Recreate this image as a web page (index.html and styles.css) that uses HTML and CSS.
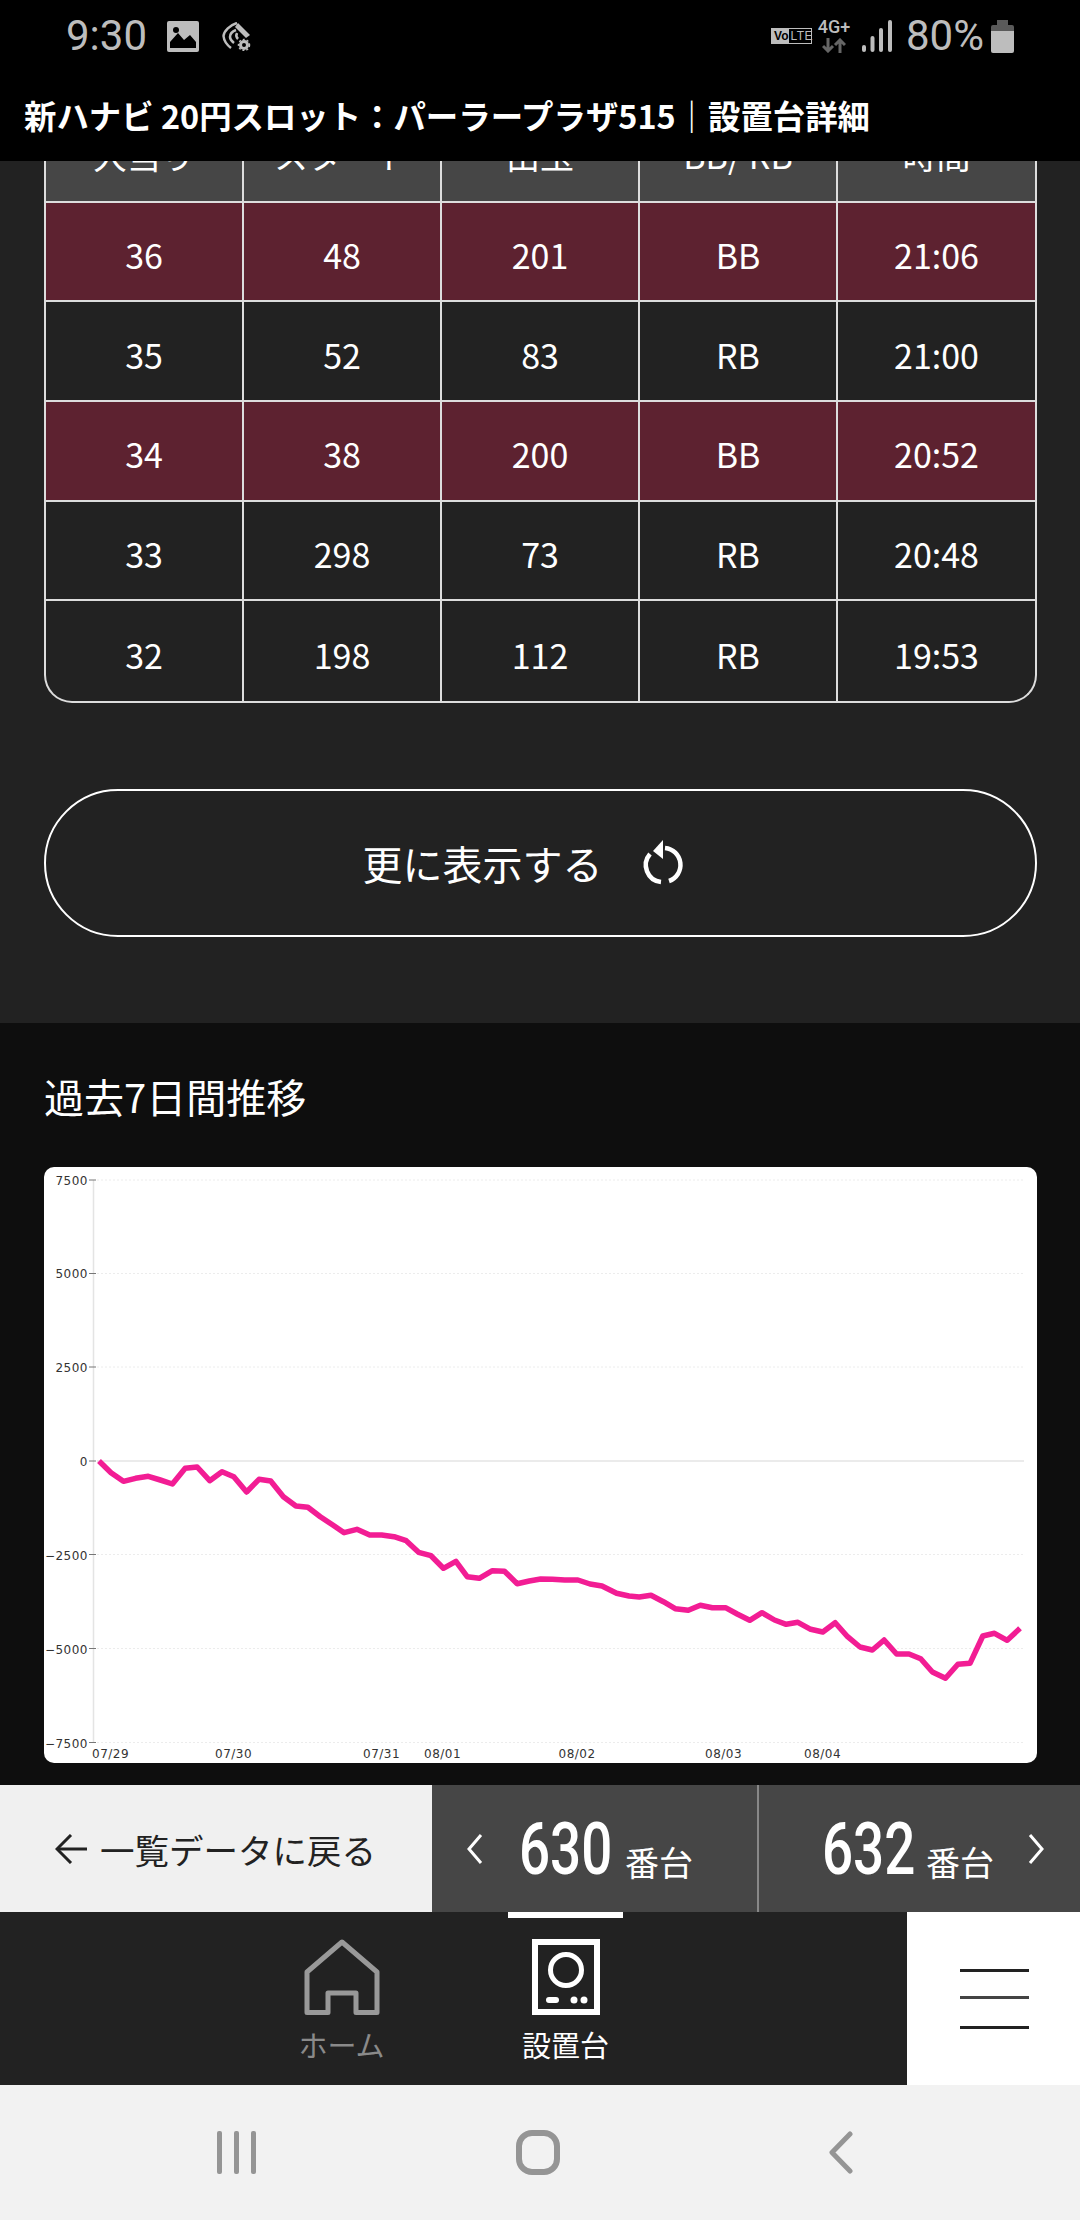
FILE: index.html
```html
<!DOCTYPE html>
<html lang="ja">
<head>
  <meta charset="UTF-8">
  <title>新ハナビ 20円スロット：パーラープラザ515｜設置台詳細</title>
  <link rel="stylesheet" href="styles.css">
</head>
<body>
  <div class="top">
    <div class="statusbar">
      <div class="status-left">
        <span class="clock">9:30</span>
        <svg class="ic-image" width="32" height="31" viewBox="0 0 32 31">
          <rect width="32" height="31" rx="2" fill="#bdbdbd"/>
          <path d="M3 27V21L11 12L17 19L23 14L29 21V27Z" fill="#000"/>
          <circle cx="9" cy="9" r="3" fill="#000"/>
        </svg>
        <svg class="ic-call" width="29" height="29" viewBox="0 0 29 29" fill="none" stroke="#bdbdbd">
          <path d="M15 1C8 3 2 9 1.500 14C2 19 5 23 9 26" stroke-width="2.500"/>
          <path d="M14 8C10 9.500 8 12 8 15C8 17 10 19.500 12 21" stroke-width="2.500"/>
          <path d="M16 1L28 13L24 16L13 5Z" fill="#bdbdbd" stroke="none"/>
          <path d="M15 11C14 13 14 15 16 17" stroke-width="2.500"/>
          <circle cx="22" cy="23" r="3.500" stroke-width="3"/>
          <circle cx="22" cy="23" r="5.500" stroke-width="1.500" stroke-dasharray="2 2"/>
        </svg>
      </div>
      <div class="status-right">
        <span class="volte"><b>Vo</b><i>LTE</i></span>
        <span class="net">
          <span class="net-label">4G+</span>
          <svg width="24" height="15" viewBox="0 0 24 15" fill="none" stroke="#666" stroke-width="3">
            <path d="M6 0V12M1 8L6 13L11 8"/>
            <path d="M18 15V3M13 7L18 2L23 7"/>
          </svg>
        </span>
        <svg class="ic-signal" width="30" height="32" viewBox="0 0 30 32" fill="#bdbdbd">
          <rect x="0" y="25" width="4" height="7" rx="2"/>
          <rect x="8.500" y="16" width="4" height="16" rx="2"/>
          <rect x="17" y="8" width="4" height="24" rx="2"/>
          <rect x="26" y="0" width="4" height="32" rx="2"/>
        </svg>
        <span class="battery-text">80%</span>
        <svg class="ic-battery" width="23" height="33" viewBox="0 0 23 33">
          <path d="M6 0H17V5H21Q23 5 23 7V11H0V7Q0 5 2 5H6Z" fill="#5a5a5a"/>
          <path d="M0 11H23V31Q23 33 21 33H2Q0 33 0 31Z" fill="#bdbdbd"/>
        </svg>
      </div>
    </div>
    <h1 class="page-title">新ハナビ 20円スロット：パーラープラザ515｜設置台詳細</h1>
  </div>

  <main class="content">
    <section class="history">
      <div class="data-table">
        <div class="cell head">大当り</div><div class="cell head">スタート</div><div class="cell head">出玉</div><div class="cell head">BB/ RB</div><div class="cell head">時間</div>
        <div class="cell bb">36</div><div class="cell bb">48</div><div class="cell bb">201</div><div class="cell bb">BB</div><div class="cell bb">21:06</div>
        <div class="cell">35</div><div class="cell">52</div><div class="cell">83</div><div class="cell">RB</div><div class="cell">21:00</div>
        <div class="cell bb">34</div><div class="cell bb">38</div><div class="cell bb">200</div><div class="cell bb">BB</div><div class="cell bb">20:52</div>
        <div class="cell">33</div><div class="cell">298</div><div class="cell">73</div><div class="cell">RB</div><div class="cell">20:48</div>
        <div class="cell">32</div><div class="cell">198</div><div class="cell">112</div><div class="cell">RB</div><div class="cell">19:53</div>
      </div>
      <button class="more-btn">
        <span>更に表示する</span>
        <svg width="48" height="48" viewBox="0 0 48 48" fill="none" stroke="#fff" stroke-width="4.500">
          <path d="M14 12L24 1V20Z" fill="#fff" stroke="none"/>
          <path d="M26 9A17 17 0 0 1 30 42"/>
          <path d="M22 43A17 17 0 0 1 11 15"/>
        </svg>
      </button>
    </section>

    <section class="trend">
      <h2 class="trend-title">過去7日間推移</h2>
      <div class="chart-card">
        <svg class="chart" width="994" height="596" viewBox="44 1167 994 596">
          <g stroke="#ececec" stroke-width="1" stroke-dasharray="2 2">
            <path d="M97 1180H1024"/>
            <path d="M97 1273.500H1024"/>
            <path d="M97 1367H1024"/>
            <path d="M97 1554.500H1024"/>
            <path d="M97 1648.500H1024"/>
            <path d="M97 1742.500H1024"/>
          </g>
          <path d="M97 1461H1024" stroke="#e4e4e4" stroke-width="1.500"/>
          <path d="M93.500 1180V1743" stroke="#e4e4e4" stroke-width="1.500"/>
          <g stroke="#777" stroke-width="1">
            <path d="M89 1180H96"/>
            <path d="M89 1273.500H96"/>
            <path d="M89 1367H96"/>
            <path d="M89 1461H96"/>
            <path d="M89 1554.500H96"/>
            <path d="M89 1648.500H96"/>
            <path d="M89 1742.500H96"/>
          </g>
          <g class="y-labels">
            <text x="88" y="1184.500">7500</text>
            <text x="88" y="1278">5000</text>
            <text x="88" y="1372">2500</text>
            <text x="88" y="1465.500">0</text>
            <text x="88" y="1559.500">−2500</text>
            <text x="88" y="1654">−5000</text>
            <text x="88" y="1748">−7500</text>
          </g>
          <g class="x-labels">
            <text x="92" y="1758">07/29</text>
            <text x="215" y="1758">07/30</text>
            <text x="363" y="1758">07/31</text>
            <text x="424" y="1758">08/01</text>
            <text x="558.500" y="1758">08/02</text>
            <text x="705" y="1758">08/03</text>
            <text x="804" y="1758">08/04</text>
          </g>
          <polyline class="line" points="99,1461 111,1472.700 123.400,1481.300 135.500,1478.300 148.300,1476.300 160.300,1480 172.400,1484 185.200,1468.300 197.200,1467 209.700,1480.700 222,1471.700 233.800,1476.700 246.600,1492 259,1479.300 270.700,1481 283.400,1496.700 295.900,1506 307.900,1507.300 320.300,1516.700 332.800,1525 344.100,1532.700 356.900,1529.300 369.700,1535 381.700,1535 394.100,1536.700 406.200,1540.700 418.600,1552.300 431,1555.700 443.400,1568.300 455.900,1561.300 467.200,1576.700 479.300,1578.300 492.400,1570.700 504.500,1571.300 517.200,1583.700 529.300,1581 540.700,1579 552.400,1579.300 564.800,1580 577.900,1580 590,1584 602,1586 616.600,1593.300 629,1596 639.300,1597 651,1595.300 663.400,1601.700 675.200,1608.700 688.300,1610.300 700.300,1605.300 712.400,1607.700 725.500,1607.700 737.200,1614 749.700,1620.300 762,1612.700 774.500,1620 786.200,1624.300 797.900,1622.300 810.700,1629.300 822.800,1632 835.200,1622.700 847.600,1636.700 860,1647 872.400,1650 884.100,1640 896.600,1654 909,1654 920.700,1658.700 932.400,1672 945.500,1678.300 957.900,1664.300 970,1663.300 982.800,1636 994.500,1633.300 1007.200,1640.300 1020,1628.300"/>
        </svg>
      </div>
    </section>
  </main>

  <div class="pager">
    <a class="back-link">
      <svg width="32" height="30" viewBox="0 0 32 30" fill="none" stroke="#222" stroke-width="3">
        <path d="M16 1L2 15L16 29"/>
        <path d="M2 15H32"/>
      </svg>
      <span>一覧データに戻る</span>
    </a>
    <a class="pager-item prev">
      <svg class="chev" width="17" height="30" viewBox="0 0 17 30" fill="none" stroke="#fff" stroke-width="3"><path d="M15 1L3 15L15 29"/></svg>
      <span class="num">630</span>
      <span class="unit">番台</span>
    </a>
    <a class="pager-item next">
      <span class="num">632</span>
      <span class="unit">番台</span>
      <svg class="chev" width="17" height="30" viewBox="0 0 17 30" fill="none" stroke="#fff" stroke-width="3"><path d="M2 1L14 15L2 29"/></svg>
    </a>
  </div>

  <nav class="tabbar">
    <div class="tabs">
      <a class="tab">
        <svg width="76" height="76" viewBox="0 0 76 76" fill="none" stroke="#999" stroke-width="5" stroke-linejoin="round">
          <path d="M38 3L3 33V73.500H24V54H52V73.500H73V33Z"/>
        </svg>
        <span>ホーム</span>
      </a>
      <a class="tab active">
        <svg width="68" height="76" viewBox="0 0 68 76" fill="#fff">
          <rect x="3" y="3" width="62" height="70" fill="none" stroke="#fff" stroke-width="6"/>
          <circle cx="34" cy="31" r="15.500" fill="none" stroke="#fff" stroke-width="5"/>
          <rect x="14" y="58" width="13" height="6" rx="3"/>
          <circle cx="42" cy="61" r="3.500"/>
          <circle cx="52" cy="61" r="3.500"/>
        </svg>
        <span>設置台</span>
      </a>
    </div>
    <a class="menu-btn">
      <svg width="69" height="60" viewBox="0 0 69 60" fill="#222">
        <rect y="0" width="69" height="3"/>
        <rect y="27" width="69" height="3" fill="#444"/>
        <rect y="57" width="69" height="3"/>
      </svg>
    </a>
  </nav>

  <div class="sysnav">
    <svg class="sys-recent" width="39" height="43" viewBox="0 0 39 43" fill="#959595">
      <rect x="0" y="0" width="5" height="43" rx="2"/>
      <rect x="17" y="0" width="5" height="43" rx="2"/>
      <rect x="34" y="0" width="5" height="43" rx="2"/>
    </svg>
    <svg class="sys-home" width="44" height="45" viewBox="0 0 44 45" fill="none" stroke="#959595" stroke-width="6">
      <rect x="3" y="3" width="38" height="39" rx="13"/>
    </svg>
    <svg class="sys-back" width="25" height="43" viewBox="0 0 25 43" fill="none" stroke="#959595" stroke-width="5" stroke-linecap="round" stroke-linejoin="round">
      <path d="M22 3L4 21.500L22 40"/>
    </svg>
  </div>
</body>
</html>
```

FILE: styles.css
```css
* {
  box-sizing: border-box;
}
html, body {
  margin: 0;
  padding: 0;
}
body {
  width: 1080px;
  height: 2220px;
  overflow: hidden;
  display: flex;
  flex-direction: column;
  background: #222;
  color: #fff;
  font-family: "Noto Sans CJK JP", sans-serif;
}
a {
  display: flex;
  text-decoration: none;
}

/* status bar + title */
.top {
  position: relative;
  z-index: 2;
  height: 161px;
  flex-shrink: 0;
  background: #000;
}
.statusbar {
  height: 72px;
  padding: 0 66px 0 66px;
  display: flex;
  justify-content: space-between;
  align-items: center;
  font-family: Roboto, sans-serif;
  font-size: 42px;
  color: #bdbdbd;
}
.status-left, .status-right {
  display: flex;
  align-items: center;
}
.clock {
  line-height: 42px;
}
.ic-image {
  margin-left: 20px;
}
.ic-call {
  margin-left: 23px;
}
.volte {
  display: flex;
  width: 41px;
  height: 16px;
  border: 1px solid #bdbdbd;
  font-family: "Liberation Sans", sans-serif;
  font-size: 12px;
  line-height: 14px;
}
.volte b {
  background: #bdbdbd;
  color: #000;
  padding: 0 1px 0 2px;
}
.volte i {
  font-style: normal;
  padding-left: 1px;
  letter-spacing: 0.5px;
}
.net {
  display: flex;
  flex-direction: column;
  align-items: center;
  margin-left: 6px;
  width: 32px;
}
.net-label {
  font-size: 18px;
  line-height: 16px;
  font-weight: 500;
  margin-bottom: 3px;
}
.ic-signal {
  margin-left: 12px;
}
.battery-text {
  margin-left: 14px;
  line-height: 42px;
}
.ic-battery {
  margin-left: 7px;
}
.page-title {
  margin: 0;
  padding: 0 0 5px 24px;
  height: 89px;
  display: flex;
  align-items: center;
  white-space: nowrap;
  font-size: 32.4px;
  font-weight: 700;
  color: #fff;
}

/* scrolled content */
.content {
  height: 1624px;
  flex-shrink: 0;
  overflow: hidden;
}
.history {
  display: flow-root;
  height: 862px;
  padding: 0 43px 0 44px;
  background: #222;
}
.data-table {
  margin-top: -58px;
  display: grid;
  grid-template-columns: 198px 198px 198px 198px 1fr;
  grid-auto-rows: 99.7px;
  border-left: 2px solid #ddd;
  border-bottom-left-radius: 28px;
  border-bottom-right-radius: 28px;
  overflow: hidden;
  border-bottom: 2px solid #ddd;
  border-right: 2px solid #ddd;
}
.cell {
  display: flex;
  align-items: center;
  justify-content: center;
  padding-top: 6px;
  border-right: 2px solid #ddd;
  border-bottom: 2px solid #ddd;
  font-size: 34px;
  color: #fff;
}
.cell:nth-child(5n) {
  border-right: 0;
}
.cell:nth-last-child(-n+5) {
  border-bottom: 0;
}
.cell.head {
  background: #464646;
}
.cell.bb {
  background: #5d2230;
}
.more-btn {
  width: 100%;
  height: 148px;
  margin-top: 86px;
  padding: 0 32px 0 0;
  display: flex;
  align-items: center;
  justify-content: center;
  gap: 36px;
  background: transparent;
  border: 2px solid #fff;
  border-radius: 74px;
  color: #fff;
  font-family: inherit;
  font-size: 40px;
}
.trend {
  height: 762px;
  padding: 0 43px 0 44px;
  background: #0e0e0e;
}
.trend-title {
  margin: 0;
  height: 144px;
  padding-top: 44px;
  font-size: 40px;
  font-weight: 400;
  line-height: 58px;
}
.chart-card {
  height: 596px;
  background: #fff;
  border-radius: 10px;
  overflow: hidden;
}
.chart {
  display: block;
  font-family: "DejaVu Sans", sans-serif;
  font-size: 12px;
  letter-spacing: 0.5px;
}
.chart text {
  fill: #333;
}
.y-labels {
  text-anchor: end;
}
.line {
  fill: none;
  stroke: #f21d94;
  stroke-width: 5.5;
  stroke-linejoin: round;
}

/* prev / next bar */
.pager {
  display: flex;
  height: 127px;
  flex-shrink: 0;
}
.back-link {
  width: 432px;
  padding-left: 55px;
  align-items: center;
  gap: 13px;
  background: #f0f0f0;
  color: #222;
  font-size: 34.5px;
}
.pager-item {
  align-items: center;
  background: #464646;
  color: #fff;
}
.pager-item.prev {
  width: 327px;
  padding-left: 34px;
  border-right: 2px solid #888;
}
.pager-item.next {
  flex: 1;
  padding-left: 63px;
}
.pager-item.prev .num {
  margin-left: 36px;
}
.pager-item.next .num {
  margin-right: 12px;
}
.pager-item.next .chev {
  margin-left: 34px;
}
.num {
  display: block;
  width: 92px;
  margin-right: 14px;
  font-family: Roboto, sans-serif;
  font-size: 73px;
  font-weight: 500;
  line-height: 80px;
  white-space: nowrap;
  transform: scaleX(0.75);
  transform-origin: left center;
}
.unit {
  font-size: 34px;
  line-height: 40px;
  padding-top: 27px;
}

/* tab bar */
.tabbar {
  display: flex;
  height: 173px;
  flex-shrink: 0;
}
.tabs {
  flex: 1;
  display: flex;
  gap: 109px;
  padding-left: 284px;
  background: #222;
}
.tab {
  width: 115px;
  flex-direction: column;
  align-items: center;
  padding-top: 21px;
  border-top: 6px solid transparent;
  color: #8a8a8a;
  font-size: 29px;
  line-height: 32px;
}
.tab span {
  margin-top: 13px;
  white-space: nowrap;
}
.tab.active {
  border-top-color: #fff;
  color: #fff;
}
.menu-btn {
  width: 173px;
  align-items: center;
  justify-content: center;
  padding-left: 2px;
  background: #fff;
}

/* android nav */
.sysnav {
  height: 135px;
  flex-shrink: 0;
  display: flex;
  align-items: center;
  padding-left: 217px;
  background: #f2f2f2;
}
.sys-home {
  margin-left: 260px;
}
.sys-back {
  margin-left: 268px;
}
```
